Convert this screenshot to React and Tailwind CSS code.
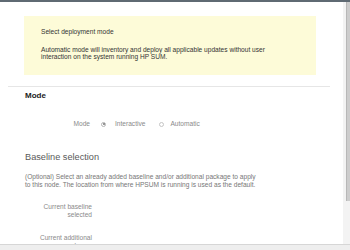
export default function App() {
  const f = { fontFamily: '"Liberation Sans", Arial, sans-serif' };
  return (
    <div className="w-[350px] h-[250px] overflow-hidden flex flex-col bg-white" style={f}>
      <div className="h-[2px] bg-[#5f6a73] shrink-0" />
      <div className="flex flex-1 min-h-0">
        <div className="flex-1 min-w-0 overflow-hidden flex flex-col">
          <div className="ml-[24px] mt-[14px] w-[292px] h-[59px] bg-[#fdfbd8] pl-[17px] pt-[12px] text-[6.6px] leading-[7px] text-[#333] shrink-0">
            <div>Select deployment mode</div>
            <div className="mt-[11px]">
              Automatic mode will inventory and deploy all applicable updates without user
              <br />
              interaction on the system running HP SUM.
            </div>
          </div>
          <div className="ml-[8px] mt-[11px] w-[322px] h-px bg-[#e6e6e6] shrink-0" />
          <div className="ml-[25px] mt-[4px] text-[8px] leading-[10px] font-bold text-[#222] shrink-0">Mode</div>
          <div className="mt-[19px] flex items-center h-[8px] text-[6.6px] text-[#8a8a8a] shrink-0">
            <div className="w-[90px] text-right">Mode</div>
            <div className="ml-[11px] w-[5px] h-[5px] rounded-full border border-[#b5b5b5] flex items-center justify-center">
              <div className="w-[2px] h-[2px] rounded-full bg-[#777]" />
            </div>
            <div className="ml-[9px]">Interactive</div>
            <div className="ml-[14px] w-[5px] h-[5px] rounded-full border border-[#c5c5c5]" />
            <div className="ml-[6px]">Automatic</div>
          </div>
          <div className="ml-[25px] mt-[23px] text-[9.2px] leading-[12px] text-[#5a5a5a] shrink-0">Baseline selection</div>
          <div className="ml-[25px] mt-[10px] text-[6.6px] leading-[8px] text-[#777] shrink-0">
            (Optional) Select an already added baseline and/or additional package to apply
            <br />
            to this node. The location from where HPSUM is running is used as the default.
          </div>
          <div className="mt-[14px] w-[92px] text-right text-[6.6px] leading-[8px] text-[#8a8a8a] shrink-0">
            Current baseline
            <br />
            selected
          </div>
          <div className="mt-[15px] w-[92px] text-right text-[6.6px] leading-[8px] text-[#8a8a8a] shrink-0">
            Current additional
            <br />
            packages
          </div>
        </div>
        <div className="w-[7px] bg-[#f3f3f3] flex justify-end shrink-0">
          <div className="w-[4px] h-[199px] bg-[#cdcdcd] border-l border-[#b8b8b8]" />
        </div>
      </div>
      <div className="h-px bg-[#d6d6d6] shrink-0" />
      <div className="h-[5px] bg-[#eeeeee] shrink-0" />
    </div>
  );
}
